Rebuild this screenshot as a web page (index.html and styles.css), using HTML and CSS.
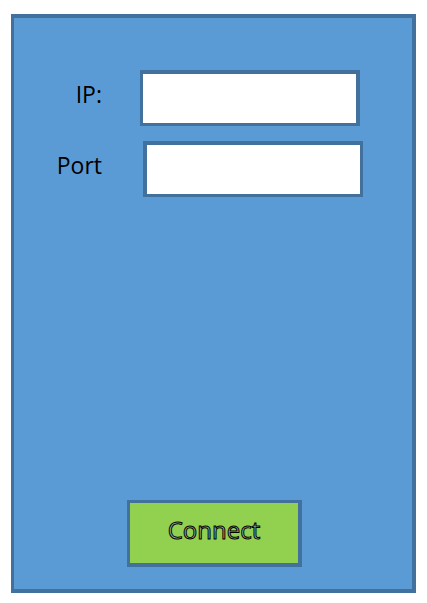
FILE: index.html
```html
<!DOCTYPE html>
<html lang="en">
<head>
<meta charset="utf-8">
<meta name="viewport" content="width=device-width, initial-scale=1">
<title>Connect</title>
<link rel="stylesheet" href="styles.css">
</head>
<body>
<form class="panel">
  <div class="fields">
    <div class="field">
      <label class="field-label" for="ip">IP:</label>
      <input class="field-input" id="ip" name="ip" type="text">
    </div>
    <div class="field field-port">
      <label class="field-label" for="port">Port</label>
      <input class="field-input" id="port" name="port" type="text">
    </div>
  </div>
  <button class="connect" type="button">Connect</button>
</form>
</body>
</html>
```
FILE: styles.css
```css
:root {
  --edge: #41719c;
  --panel: #5b9bd5;
  --action: #92d050;
}

* {
  box-sizing: border-box;
}

body {
  display: flex;
  min-height: 100vh;
  margin: 0;
  padding: 14px 11px 10px;
  background: #fff;
  color: #000;
  font-family: "Open Sans", "Noto Sans", sans-serif;
  font-size: 23px;
}

.panel {
  display: flex;
  flex: 1;
  flex-direction: column;
  justify-content: space-between;
  padding: 52px 0 22px 3px;
  border: 4px solid var(--edge);
  border-left-width: 3px;
  background: var(--panel);
}

.fields {
  display: flex;
  flex-direction: column;
  gap: 15px;
  padding: 0 49px 0 39px;
}

.field {
  display: grid;
  grid-template-columns: 46px 1fr;
  column-gap: 38px;
  padding-right: 3px;
}

.field-port {
  column-gap: 41px;
  padding-right: 0;
}

.field-label {
  line-height: 48px;
  text-align: right;
}

.field-input {
  width: 100%;
  height: 56px;
  padding: 0 8px;
  border: 3px solid var(--edge);
  border-top-width: 4px;
  border-right-width: 4px;
  border-radius: 0;
  background: #fff;
  font: inherit;
}

.field-port .field-input {
  border-right-width: 3px;
  border-left-width: 4px;
}

.connect {
  align-self: center;
  width: 175px;
  height: 67px;
  padding: 0 0 8px;
  border: 3px solid var(--edge);
  border-right-width: 4px;
  border-bottom-width: 4px;
  border-radius: 0;
  background: var(--action);
  color: #a9b89a;
  font: inherit;
  font-size: 24px;
  -webkit-text-stroke: 1px #000;
}
```
